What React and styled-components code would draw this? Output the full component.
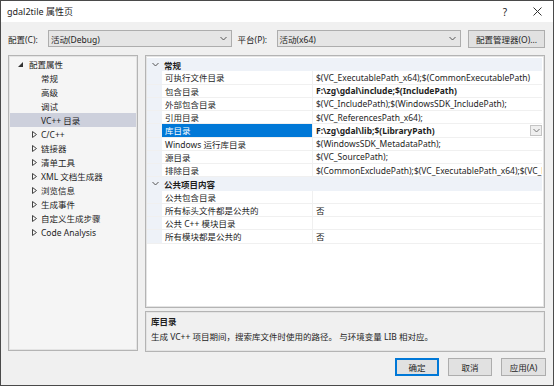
import React from "react";
import styled, { createGlobalStyle } from "styled-components";

const GlobalStyle = createGlobalStyle`
  html, body { margin: 0; padding: 0; background: #f0f0f0; }
  body { font-family: "Noto Sans", "Noto Sans CJK SC", sans-serif; font-size: 8.5px; color: #1e1e1e; }
  * { box-sizing: border-box; }
`;

const Window = styled.div`
  width: 554px;
  height: 386px;
  border: 1px solid #4a4a4a;
  background: #f0f0f0;
  display: flex;
  flex-direction: column;
  overflow: hidden;
`;

const TitleBar = styled.div`
  height: 21px;
  background: #fff;
  display: flex;
  align-items: center;
  padding: 0 0 0 6px;
  font-size: 9px;
`;

const TitleText = styled.div`
  flex: 1;
`;

const TitleBtn = styled.div`
  width: 32px;
  display: flex;
  justify-content: center;
  align-items: center;
  color: #222;
  font-size: 10px;
`;

const Toolbar = styled.div`
  display: flex;
  align-items: center;
  height: 17px;
  margin: 8px 8px 0 7px;
`;

const Label = styled.div`
  width: ${p => p.w}px;
  white-space: nowrap;
`;

const Combo = styled.div`
  width: ${p => p.w}px;
  height: 17px;
  background: #e5e5e5;
  border: 1px solid #adadad;
  display: flex;
  align-items: center;
  padding: 0 4px 0 2px;
  margin-right: ${p => p.mr || 0}px;
`;

const ComboText = styled.div`
  flex: 1;
`;

const Button = styled.div`
  width: ${p => p.w}px;
  height: 18px;
  background: #e1e1e1;
  border: ${p => (p.primary ? "1px solid #0078d7" : "1px solid #adadad")};
  box-shadow: ${p => (p.primary ? "inset 0 0 0 1px #0078d7" : "none")};
  display: flex;
  align-items: center;
  justify-content: center;
  white-space: nowrap;
`;

const Main = styled.div`
  display: flex;
  gap: 7px;
  margin: 8px 8px 0 7px;
  height: 297px;
`;

const Tree = styled.div`
  width: 131px;
  height: 296px;
  background: #f5f5f5;
  border: 1px solid #b4b4b4;
  box-shadow: inset 0 0 0 1px #e4e4e4;
  padding-top: 1px;
`;

const TreeRow = styled.div`
  height: 14px;
  display: flex;
  align-items: center;
  padding-left: ${p => p.indent}px;
  background: ${p => (p.selected ? "#cdd0dc" : "transparent")};
  margin: 0 1px;
  white-space: nowrap;
`;

const Expander = styled.div`
  width: ${p => p.w}px;
  display: flex;
  align-items: center;
`;

const RightCol = styled.div`
  width: 400px;
  display: flex;
  flex-direction: column;
  gap: 3px;
`;

const Grid = styled.div`
  height: 253px;
  background: #fff;
  border: 1px solid #b4b4b4;
  box-shadow: inset 0 0 0 1px #e4e4e4;
  padding: 2px 2px 0 1px;
`;

const CatRow = styled.div`
  height: 13.25px;
  display: flex;
  align-items: center;
  background: #eef2f8;
  font-weight: bold;
`;

const CatIcon = styled.div`
  width: 17px;
  padding-left: 5px;
  display: flex;
  align-items: center;
`;

const PropRow = styled.div`
  height: 13.25px;
  display: flex;
  border-bottom: 1px solid #f0f0f0;
`;

const Gutter = styled.div`
  width: 15px;
  background: #eef2f8;
`;

const NameCell = styled.div`
  width: 151px;
  padding-left: 3px;
  display: flex;
  align-items: center;
  background: ${p => (p.selected ? "#0078d7" : "#fff")};
  color: ${p => (p.selected ? "#fff" : "#1e1e1e")};
  border-right: 1px solid #f0f0f0;
  white-space: nowrap;
`;

const ValueCell = styled.div`
  flex: 1;
  padding-left: 3px;
  display: flex;
  align-items: center;
  white-space: nowrap;
  overflow: hidden;
  font-weight: ${p => (p.bold ? "bold" : "normal")};
`;

const ValueText = styled.div`
  flex: 1;
  overflow: hidden;
`;

const DropBtn = styled.div`
  width: 12px;
  height: 11px;
  border: 1px solid #c4c4c4;
  background: #efefef;
  display: flex;
  align-items: center;
  justify-content: center;
`;

const Desc = styled.div`
  height: 41px;
  border: 1px solid #b4b4b4;
  box-shadow: inset 0 0 0 1px #e4e4e4;
  padding: 2px 5px;
  line-height: 15px;
`;

const DescTitle = styled.div`
  font-weight: bold;
`;

const Footer = styled.div`
  display: flex;
  justify-content: flex-end;
  gap: 9px;
  margin: 6px 7px 0 0;
`;

const Chevron = ({ color = "#555" }) => (
  <svg width="7" height="5" viewBox="0 0 7 5">
    <polyline points="0.5,1 3.5,4 6.5,1" fill="none" stroke={color} strokeWidth="1" />
  </svg>
);

const Collapsed = () => (
  <svg width="5" height="7" viewBox="0 0 5 7">
    <polygon points="0.5,0.5 4.5,3.5 0.5,6.5" fill="none" stroke="#444" strokeWidth="1" />
  </svg>
);

const Expanded = () => (
  <svg width="5" height="5" viewBox="0 0 5 5">
    <polygon points="5,0 5,5 0,5" fill="#333" />
  </svg>
);

const treeItems = [
  { t: "常规", c: false },
  { t: "高级", c: false },
  { t: "调试", c: false },
  { t: "VC++ 目录", c: false, sel: true },
  { t: "C/C++", c: true },
  { t: "链接器", c: true },
  { t: "清单工具", c: true },
  { t: "XML 文档生成器", c: true },
  { t: "浏览信息", c: true },
  { t: "生成事件", c: true },
  { t: "自定义生成步骤", c: true },
  { t: "Code Analysis", c: true },
];

const general = [
  ["可执行文件目录", "$(VC_ExecutablePath_x64);$(CommonExecutablePath)"],
  ["包含目录", "F:\\zg\\gdal\\include;$(IncludePath)", "bold"],
  ["外部包含目录", "$(VC_IncludePath);$(WindowsSDK_IncludePath);"],
  ["引用目录", "$(VC_ReferencesPath_x64);"],
  ["库目录", "F:\\zg\\gdal\\lib;$(LibraryPath)", "bold", true],
  ["Windows 运行库目录", "$(WindowsSDK_MetadataPath);"],
  ["源目录", "$(VC_SourcePath);"],
  ["排除目录", "$(CommonExcludePath);$(VC_ExecutablePath_x64);$(VC_LibraryPath_x64)"],
];

const publicItems = [
  ["公共包含目录", ""],
  ["所有标头文件都是公共的", "否"],
  ["公共 C++ 模块目录", ""],
  ["所有模块都是公共的", "否"],
];

const Prop = ({ name, value, bold, selected }) => (
  <PropRow>
    <Gutter />
    <NameCell selected={selected}>{name}</NameCell>
    <ValueCell bold={bold}>
      <ValueText>{value}</ValueText>
      {selected && (
        <DropBtn>
          <Chevron color="#777" />
        </DropBtn>
      )}
    </ValueCell>
  </PropRow>
);

export default function App() {
  return (
    <>
      <GlobalStyle />
      <Window>
        <TitleBar>
          <TitleText>gdal2tile 属性页</TitleText>
          <TitleBtn>?</TitleBtn>
          <TitleBtn>
            <svg width="9" height="9" viewBox="0 0 9 9">
              <path d="M0.5 0.5 L8.5 8.5 M8.5 0.5 L0.5 8.5" stroke="#333" strokeWidth="1" />
            </svg>
          </TitleBtn>
        </TitleBar>
        <Toolbar>
          <Label w={40}>配置(C):</Label>
          <Combo w={184} mr={6}>
            <ComboText>活动(Debug)</ComboText>
            <Chevron />
          </Combo>
          <Label w={39}>平台(P):</Label>
          <Combo w={185} mr={7}>
            <ComboText>活动(x64)</ComboText>
            <Chevron />
          </Combo>
          <Button w={77}>配置管理器(O)...</Button>
        </Toolbar>
        <Main>
          <Tree>
            <TreeRow indent={8}>
              <Expander w={11}>
                <Expanded />
              </Expander>
              配置属性
            </TreeRow>
            {treeItems.map(it => (
              <TreeRow key={it.t} indent={22} selected={it.sel}>
                <Expander w={9}>{it.c && <Collapsed />}</Expander>
                {it.t}
              </TreeRow>
            ))}
          </Tree>
          <RightCol>
            <Grid>
              <CatRow>
                <CatIcon>
                  <Chevron />
                </CatIcon>
                常规
              </CatRow>
              {general.map(([n, v, b, s]) => (
                <Prop key={n} name={n} value={v} bold={!!b} selected={!!s} />
              ))}
              <CatRow>
                <CatIcon>
                  <Chevron />
                </CatIcon>
                公共项目内容
              </CatRow>
              {publicItems.map(([n, v]) => (
                <Prop key={n} name={n} value={v} />
              ))}
            </Grid>
            <Desc>
              <DescTitle>库目录</DescTitle>
              <div>生成 VC++ 项目期间，搜索库文件时使用的路径。 与环境变量 LIB 相对应。</div>
            </Desc>
          </RightCol>
        </Main>
        <Footer>
          <Button w={44} primary>
            确定
          </Button>
          <Button w={44}>取消</Button>
          <Button w={45}>应用(A)</Button>
        </Footer>
      </Window>
    </>
  );
}
